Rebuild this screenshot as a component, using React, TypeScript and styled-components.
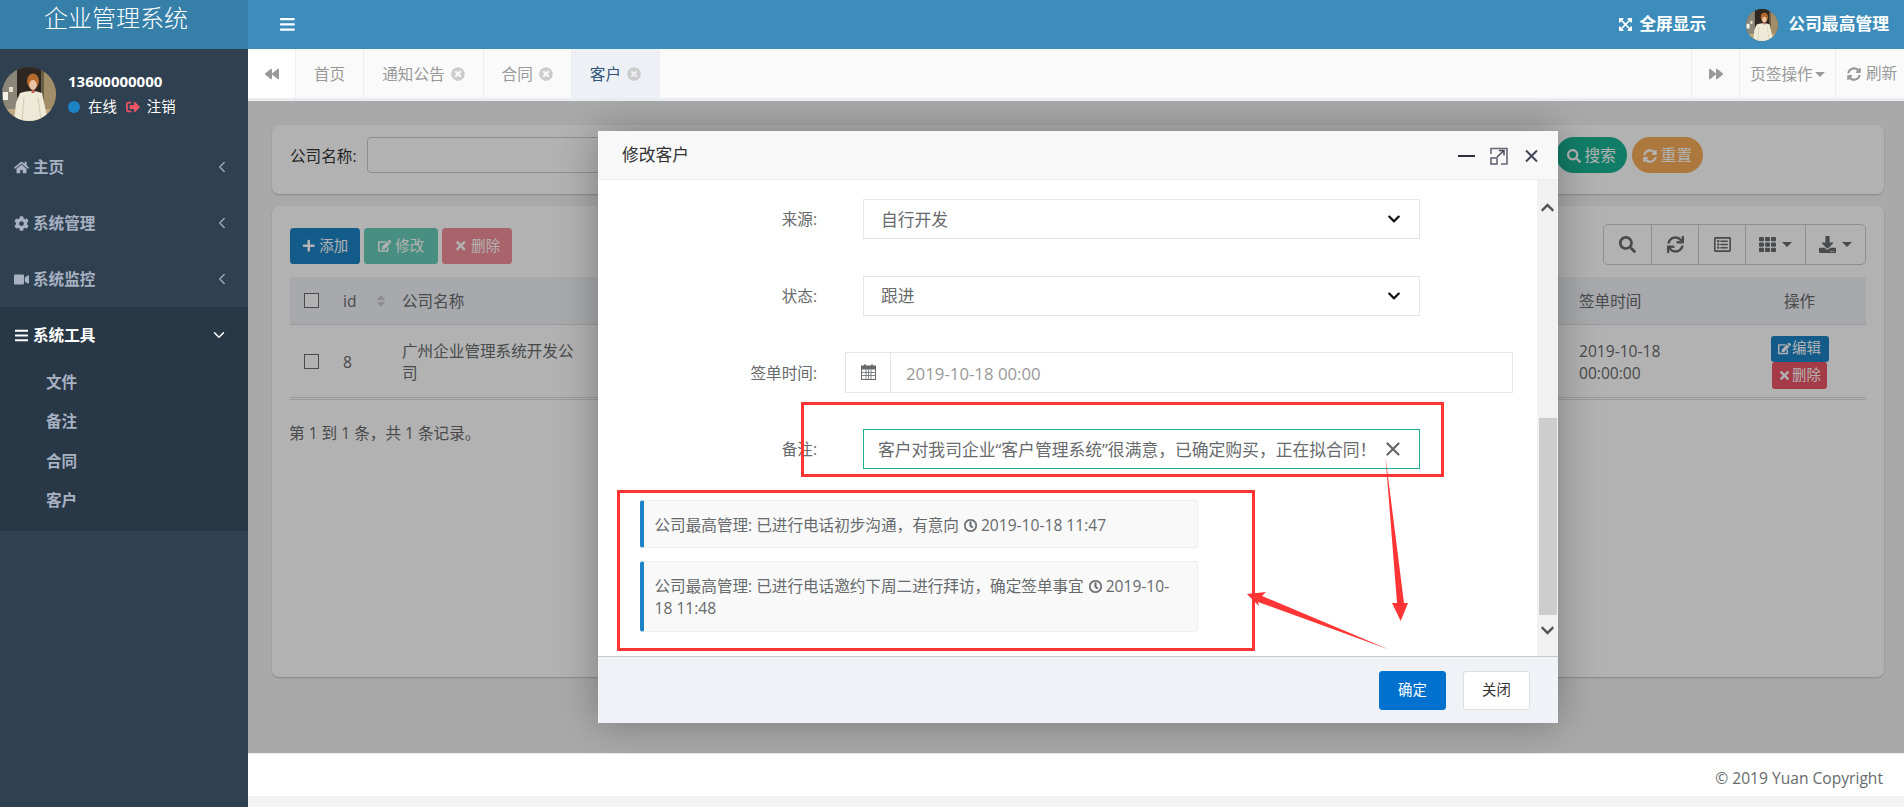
import React from 'react';
import styled, { createGlobalStyle } from 'styled-components';
import { ChevronDown, ChevronLeft, X } from 'lucide-react';
import {
  FaBackward,
  FaBars,
  FaChevronDown,
  FaChevronUp,
  FaCog,
  FaDownload,
  FaEdit,
  FaExpandArrowsAlt,
  FaForward,
  FaHome,
  FaPlus,
  FaRegClock,
  FaRegListAlt,
  FaSearch,
  FaSignOutAlt,
  FaSort,
  FaSync,
  FaSyncAlt,
  FaTh,
  FaTimes,
  FaTimesCircle,
  FaVideo,
} from 'react-icons/fa';

const GlobalStyle = createGlobalStyle`
  html, body {
    margin: 0;
    padding: 0;
    background: #fff;
    overflow: hidden;
  }
  * {
    box-sizing: border-box;
  }
  body {
    font-family: "Open Sans", "Noto Sans CJK SC", sans-serif;
    font-size: 15.6px;
    line-height: 22.3px;
    color: #676a6c;
  }
`;

const Page = styled.div`
  position: relative;
  width: 1904px;
  height: 807px;
  display: flex;
`;

const Sidebar = styled.aside`
  width: 248px;
  flex-shrink: 0;
  background: #2f4050;
  color: #a7b1c2;
`;

const Logo = styled.div`
  height: 49px;
  background: #367fa9;
  color: #fff;
  font-size: 24px;
  font-weight: 300;
  line-height: 36px;
  padding-left: 44px;
`;

const Profile = styled.div`
  height: 90px;
  padding: 18px 0 0 2px;
  display: flex;
  gap: 12px;
`;

const ProfileText = styled.div`
  color: #fff;
  padding-top: 3px;
`;

const ProfileName = styled.div`
  font-size: 15px;
  font-weight: 700;
  line-height: 22px;
`;

const ProfileStatus = styled.div`
  margin-top: 4px;
  display: flex;
  align-items: center;
  font-size: 14.4px;
  line-height: 22px;
`;

const StatusDot = styled.span`
  width: 12px;
  height: 12px;
  border-radius: 50%;
  background: #1c84c6;
  margin-right: 8px;
`;

const LogoutIcon = styled(FaSignOutAlt)`
  color: #ed5565;
  font-size: 14px;
  margin: 0 7px 0 9px;
`;

const NavItem = styled.div<{ $active?: boolean }>`
  height: 56px;
  display: flex;
  align-items: center;
  gap: 4px;
  padding: 0 17px 0 14px;
  font-size: 15.6px;
  font-weight: 600;
  color: ${(p) => (p.$active ? '#fff' : '#a7b1c2')};
  background: ${(p) => (p.$active ? '#293846' : 'transparent')};

  > svg {
    font-size: 15px;
    flex-shrink: 0;
  }
`;

const NavArrow = styled.span<{ $open?: boolean }>`
  margin-left: auto;
  margin-right: ${(p) => (p.$open ? '3px' : '0')};
  display: flex;
`;

const SubMenu = styled.div`
  background: #293846;
  padding-bottom: 10px;
`;

const SubItem = styled.div`
  height: 39.4px;
  line-height: 39.4px;
  padding-left: 46px;
  font-weight: 600;
  color: #a7b1c2;
`;

const Main = styled.main`
  flex: 1;
  min-width: 0;
  display: flex;
  flex-direction: column;
`;

const TopBar = styled.header`
  height: 49px;
  background: #3c8dbc;
  color: #fff;
  display: flex;
  align-items: center;
  padding: 0 15px 0 31px;
  font-size: 16.8px;
  font-weight: 700;
`;

const TopAction = styled.div`
  margin-left: auto;
  display: flex;
  align-items: center;
  gap: 6px;
  margin-right: 40px;

  svg {
    font-size: 15px;
  }
`;

const TopUser = styled.div`
  display: flex;
  align-items: center;
  gap: 10px;
`;

const TabsBar = styled.nav`
  height: 52px;
  background: #fafafa;
  border-bottom: 3px solid #e9edf1;
  display: flex;
  color: #999;
`;

const TabArrow = styled.div<{ $white?: boolean }>`
  width: 48px;
  display: flex;
  align-items: center;
  justify-content: center;
  font-size: 14px;
  background: ${(p) => (p.$white ? '#fff' : 'transparent')};
  border-right: 1px solid #eee;
`;

const Tab = styled.div<{ $active?: boolean }>`
  display: flex;
  align-items: center;
  gap: 6px;
  padding: 2px 18px 0;
  border-right: 1px solid #eee;
  background: ${(p) => (p.$active ? '#edf1f5' : 'transparent')};
  color: ${(p) => (p.$active ? '#2f5578' : '#999')};

  svg {
    color: #ccc;
    font-size: 14px;
    margin-top: -2px;
  }
`;

const TabSpacer = styled.div`
  flex: 1;
  border-right: 1px solid #eee;
`;

const TabMenu = styled.div`
  width: 96px;
  display: flex;
  align-items: center;
  justify-content: center;
  gap: 2px;
  padding-top: 2px;
  border-right: 1px solid #eee;
`;

const TabRefresh = styled.div`
  width: 68px;
  display: flex;
  align-items: center;
  padding: 0 0 0 11px;
  gap: 5px;

  svg {
    font-size: 14px;
  }
`;

const Caret = styled.span`
  width: 0;
  height: 0;
  border-top: 5px solid currentColor;
  border-left: 5px solid transparent;
  border-right: 5px solid transparent;
`;

const ContentFrame = styled.section`
  position: relative;
  flex: 1;
  overflow: hidden;
  background: #f3f3f4;
  padding: 24px 20px 0 24px;
`;

const Panel = styled.div`
  background: #fff;
  border-radius: 7px;
  box-shadow: 0 1px 2px rgba(0, 0, 0, 0.2);
  padding: 12px 18px;
`;

const SearchPanel = styled(Panel)`
  height: 69px;
  display: flex;
  align-items: flex-start;
`;

const SearchLabel = styled.label`
  line-height: 38px;
  color: #333;
  margin-right: 11px;
  white-space: nowrap;
`;

const SearchInput = styled.input`
  width: 640px;
  height: 36px;
  border: 1px solid #ccc;
  border-radius: 4px;
  background: #fff;
`;

const SearchButtons = styled.div`
  margin-left: auto;
  margin-right: 163px;
  display: flex;
  gap: 5px;
`;

const PillButton = styled.button<{ $bg: string }>`
  height: 36px;
  padding: 1px 11px 0;
  border: none;
  border-radius: 18px;
  background: ${(p) => p.$bg};
  color: #fff;
  font: inherit;
  display: flex;
  align-items: center;
  gap: 4px;

  svg {
    font-size: 14px;
  }
`;

const TablePanel = styled(Panel)`
  margin-top: 12px;
  height: 471px;
  padding: 18px;
`;

const ToolbarRow = styled.div`
  display: flex;
  justify-content: space-between;
  align-items: flex-start;
  margin-bottom: 12px;
`;

const ActionButtons = styled.div`
  margin-top: 4px;
  display: flex;
  gap: 4px;
`;

const ActionButton = styled.button<{ $bg: string; $dim?: boolean; $w: number }>`
  width: ${(p) => p.$w}px;
  height: 36px;
  padding: 0;
  border: none;
  border-radius: 3.6px;
  background: ${(p) => p.$bg};
  opacity: ${(p) => (p.$dim ? 0.65 : 1)};
  color: #fff;
  font: inherit;
  font-size: 14.4px;
  display: flex;
  align-items: center;
  justify-content: center;
  gap: 4px;

  svg {
    font-size: 13.5px;
  }
`;

const ToolGroup = styled.div`
  height: 41px;
  display: flex;
  border: 1.2px solid #ccc;
  border-radius: 5px;
  color: #676a6c;
`;

const ToolCell = styled.div<{ $w: number }>`
  width: ${(p) => p.$w}px;
  display: flex;
  align-items: center;
  justify-content: center;
  gap: 6px;
  font-size: 17px;

  & + & {
    border-left: 1.2px solid #ccc;
  }
`;

const TableRow = styled.div<{ $head?: boolean }>`
  display: grid;
  grid-template-columns: 47px 65px 190px 1fr 154px 133px;
  align-items: center;
  height: ${(p) => (p.$head ? '48px' : '75px')};
  padding-top: 2px;
  background: ${(p) => (p.$head ? '#eff2f7' : 'transparent')};
  border-bottom: ${(p) => (p.$head ? '1.2px solid #ddd' : '3px double #ddd')};
`;

const CheckBox = styled.span`
  display: block;
  width: 15px;
  height: 15px;
  margin: -2px 0 0 14px;
  border: 1.2px solid #676a6c;
  background: #fff;
`;

const IdCell = styled.div`
  padding-left: 6px;
  display: flex;
  align-items: center;
  gap: 18px;

  svg {
    font-size: 14px;
    color: #ccc;
  }
`;

const NameCell = styled.div`
  width: 180px;
`;

const DateCell = styled.div`
  padding-right: 50px;
`;

const OpCell = styled.div`
  display: flex;
  flex-direction: column;
  align-items: center;
`;

const RowButton = styled.button<{ $bg: string; $w: number; $h: number }>`
  width: ${(p) => p.$w}px;
  height: ${(p) => p.$h}px;
  padding: 0;
  border: none;
  border-radius: 3px;
  background: ${(p) => p.$bg};
  color: #fff;
  font: inherit;
  font-size: 14.4px;
  display: flex;
  align-items: center;
  justify-content: center;
  gap: 1px;

  svg {
    font-size: 13px;
  }
`;

const RecordCount = styled.div`
  margin: 22px 0 0 -1px;
`;

const Overlay = styled.div`
  position: absolute;
  inset: 0;
  background: rgba(0, 0, 0, 0.3);
`;

const Modal = styled.div`
  position: absolute;
  left: 350px;
  top: 30px;
  width: 960px;
  height: 592px;
  display: flex;
  flex-direction: column;
  background: #fff;
  box-shadow: 0 0 38px rgba(0, 0, 0, 0.3);
`;

const ModalHead = styled.div`
  height: 49px;
  flex-shrink: 0;
  display: flex;
  align-items: center;
  padding: 1px 0 0 24px;
  background: #f8f8f8;
  border-bottom: 1px solid #eee;
  color: #333;
  font-size: 16.8px;
`;

const HeadTools = styled.svg`
  margin-left: auto;
  margin-right: 20px;
`;

const ModalBody = styled.div`
  flex: 1;
  min-height: 0;
  display: flex;
`;

const FormArea = styled.div`
  flex: 1;
  padding-top: 19px;
`;

const FormRow = styled.div`
  display: flex;
  align-items: center;
  height: 40px;
  margin-bottom: 36.6px;
`;

const FormLabel = styled.label`
  width: 219px;
  margin-right: 28px;
  padding-top: 1px;
  text-align: right;
  color: #676a6c;
`;

const SelectBox = styled.div<{ $focus?: boolean }>`
  width: 557px;
  height: 40px;
  margin-left: 18px;
  padding: 2px ${(p) => (p.$focus ? '15px' : '18px')} 0 ${(p) => (p.$focus ? '14px' : '17px')};
  display: flex;
  align-items: center;
  justify-content: space-between;
  border: 1.2px solid ${(p) => (p.$focus ? '#1ab394' : '#e5e6e7')};
  font-size: 16.8px;
  white-space: nowrap;

  > svg {
    font-size: 14px;
    margin-top: -2px;
    color: ${(p) => (p.$focus ? '#666' : '#111')};
  }
`;

const DateGroup = styled.div`
  width: 668px;
  height: 41px;
  display: flex;
  border: 1.2px solid #e5e6e7;
`;

const DateAddon = styled.div`
  width: 45px;
  display: flex;
  align-items: center;
  justify-content: center;
  border-right: 1.2px solid #e5e6e7;
`;

const DateValue = styled.div`
  padding-left: 15px;
  font-size: 16.8px;
  line-height: 41px;
  color: #999;
`;

const NoteList = styled.div`
  margin-top: -5.6px;
  padding-left: 42px;
  display: flex;
  flex-direction: column;
  gap: 13px;
`;

const NoteCard = styled.div`
  width: 558px;
  padding: 13px 14px 11px 10.5px;
  background: #f9f9f9;
  border: 1.2px solid #eee;
  border-left: 4.8px solid #1c84c6;
  border-radius: 3px;

  svg {
    font-size: 13px;
    margin: 0 4px 0 5px;
    vertical-align: -1px;
    stroke: currentColor;
    stroke-width: 24;
  }
`;

const ScrollTrack = styled.div`
  width: 21px;
  flex-shrink: 0;
  background: #f1f1f1;
  padding-top: 20px;
  display: flex;
  flex-direction: column;
  align-items: center;
  color: #555;
  font-size: 15px;
`;

const ScrollThumb = styled.div`
  width: 18px;
  height: 197px;
  margin: 203px 0 8px;
  background: #cdcdcd;
`;

const ModalFoot = styled.div`
  height: 67px;
  flex-shrink: 0;
  display: flex;
  align-items: center;
  justify-content: flex-end;
  gap: 17px;
  padding: 0 28px 0 0;
  background: #eff3f8;
  border-top: 1px solid #c9c9c9;
`;

const FootButton = styled.button<{ $primary?: boolean }>`
  width: 67px;
  height: 39px;
  border-radius: 3px;
  border: 1.2px solid ${(p) => (p.$primary ? '#0071ce' : '#dedede')};
  background: ${(p) => (p.$primary ? '#0071ce' : '#fff')};
  color: ${(p) => (p.$primary ? '#fff' : '#333')};
  font: inherit;
  font-size: 14.4px;
`;

const Footer = styled.footer`
  height: 43px;
  padding-right: 21px;
  background: #fff;
  border-top: 1px solid #e7eaec;
  text-align: right;
  line-height: 49px;
`;

const FooterStrip = styled.div`
  height: 11px;
  background: #f3f3f3;
`;

const Highlight = styled.div<{ $x: number; $y: number; $w: number; $h: number }>`
  position: absolute;
  left: ${(p) => p.$x}px;
  top: ${(p) => p.$y}px;
  width: ${(p) => p.$w}px;
  height: ${(p) => p.$h}px;
  border: 3px solid #ff3535;
  pointer-events: none;
`;

const ArrowLayer = styled.svg`
  position: absolute;
  inset: 0;
  pointer-events: none;
`;

const AvatarImage = styled.svg<{ $size: number }>`
  width: ${(p) => p.$size}px;
  height: ${(p) => p.$size}px;
  flex-shrink: 0;
  border-radius: 50%;
`;

const Avatar = ({ size }: { size: number }) => (
  <AvatarImage $size={size} viewBox="0 0 54 54">
    <rect width="54" height="54" fill="#6a5d45" />
    <rect x="0" y="0" width="15" height="54" fill="#8b8778" />
    <rect x="15" y="0" width="24" height="30" fill="#2e2620" />
    <rect x="42" y="0" width="12" height="54" fill="#a18d68" />
    <rect x="1" y="25" width="5" height="8" fill="#f5f2e8" />
    <rect x="7" y="20" width="4" height="5" fill="#e6e0cf" />
    <rect x="0" y="42" width="54" height="12" fill="#bfa97f" />
    <path d="M18 26 Q30 22 40 26 L46 54 L12 54 L14 36 Z" fill="#efead8" />
    <path d="M22 30 L20 54 M36 30 L39 54" stroke="#d6cdb4" strokeWidth="1.2" fill="none" />
    <ellipse cx="31" cy="14" rx="6" ry="7.5" fill="#b5692c" />
    <ellipse cx="31" cy="18" rx="3.8" ry="5" fill="#eac3a3" />
    <rect x="29.5" y="23" width="3" height="3" fill="#c8604e" />
  </AvatarImage>
);

const CalendarIcon = () => (
  <svg width="15" height="16" viewBox="0 0 15 16">
    <rect x="0.5" y="2" width="14" height="13.5" fill="#fff" stroke="#676a6c" />
    <rect x="0.5" y="2" width="14" height="3.5" fill="#676a6c" />
    <rect x="3" y="0.5" width="2" height="3.5" fill="#676a6c" />
    <rect x="10" y="0.5" width="2" height="3.5" fill="#676a6c" />
    <path
      d="M5 5.5 V15 M7.5 5.5 V15 M10 5.5 V15 M1 8.5 H14 M1 11.5 H14"
      stroke="#676a6c"
      strokeWidth="0.8"
    />
  </svg>
);

const App: React.FC = () => {
  return (
    <>
      <GlobalStyle />
      <Page>
        <Sidebar>
          <Logo>企业管理系统</Logo>
          <Profile>
            <Avatar size={54} />
            <ProfileText>
              <ProfileName>13600000000</ProfileName>
              <ProfileStatus>
                <StatusDot />
                在线
                <LogoutIcon />
                注销
              </ProfileStatus>
            </ProfileText>
          </Profile>
          <NavItem>
            <FaHome />
            主页
            <NavArrow>
              <ChevronLeft size={18} strokeWidth={1.6} />
            </NavArrow>
          </NavItem>
          <NavItem>
            <FaCog />
            系统管理
            <NavArrow>
              <ChevronLeft size={18} strokeWidth={1.6} />
            </NavArrow>
          </NavItem>
          <NavItem>
            <FaVideo />
            系统监控
            <NavArrow>
              <ChevronLeft size={18} strokeWidth={1.6} />
            </NavArrow>
          </NavItem>
          <NavItem $active>
            <FaBars />
            系统工具
            <NavArrow $open>
              <ChevronDown size={18} strokeWidth={2} />
            </NavArrow>
          </NavItem>
          <SubMenu>
            <SubItem>文件</SubItem>
            <SubItem>备注</SubItem>
            <SubItem>合同</SubItem>
            <SubItem>客户</SubItem>
          </SubMenu>
        </Sidebar>
        <Main>
          <TopBar>
            <FaBars />
            <TopAction>
              <FaExpandArrowsAlt />
              全屏显示
            </TopAction>
            <TopUser>
              <Avatar size={32} />
              公司最高管理
            </TopUser>
          </TopBar>
          <TabsBar>
            <TabArrow $white>
              <FaBackward />
            </TabArrow>
            <Tab>首页</Tab>
            <Tab>
              通知公告
              <FaTimesCircle />
            </Tab>
            <Tab>
              合同
              <FaTimesCircle />
            </Tab>
            <Tab $active>
              客户
              <FaTimesCircle />
            </Tab>
            <TabSpacer />
            <TabArrow>
              <FaForward />
            </TabArrow>
            <TabMenu>
              页签操作
              <Caret />
            </TabMenu>
            <TabRefresh>
              <FaSyncAlt />
              刷新
            </TabRefresh>
          </TabsBar>
          <ContentFrame>
            <SearchPanel>
              <SearchLabel>公司名称:</SearchLabel>
              <SearchInput />
              <SearchButtons>
                <PillButton $bg="#1ab394">
                  <FaSearch />
                  搜索
                </PillButton>
                <PillButton $bg="#f8ac59">
                  <FaSyncAlt />
                  重置
                </PillButton>
              </SearchButtons>
            </SearchPanel>
            <TablePanel>
              <ToolbarRow>
                <ActionButtons>
                  <ActionButton $bg="#1c84c6" $w={70}>
                    <FaPlus />
                    添加
                  </ActionButton>
                  <ActionButton $bg="#1ab394" $dim $w={74}>
                    <FaEdit />
                    修改
                  </ActionButton>
                  <ActionButton $bg="#ed5565" $dim $w={70}>
                    <FaTimes />
                    删除
                  </ActionButton>
                </ActionButtons>
                <ToolGroup>
                  <ToolCell $w={47}>
                    <FaSearch />
                  </ToolCell>
                  <ToolCell $w={47}>
                    <FaSync />
                  </ToolCell>
                  <ToolCell $w={47}>
                    <FaRegListAlt />
                  </ToolCell>
                  <ToolCell $w={60}>
                    <FaTh />
                    <Caret />
                  </ToolCell>
                  <ToolCell $w={60}>
                    <FaDownload />
                    <Caret />
                  </ToolCell>
                </ToolGroup>
              </ToolbarRow>
              <TableRow $head>
                <CheckBox />
                <IdCell>
                  id
                  <FaSort />
                </IdCell>
                <NameCell>公司名称</NameCell>
                <div />
                <div>签单时间</div>
                <OpCell>操作</OpCell>
              </TableRow>
              <TableRow>
                <CheckBox />
                <IdCell>8</IdCell>
                <NameCell>广州企业管理系统开发公司</NameCell>
                <div />
                <DateCell>2019-10-18 00:00:00</DateCell>
                <OpCell>
                  <RowButton $bg="#1c84c6" $w={58} $h={26}>
                    <FaEdit />
                    编辑
                  </RowButton>
                  <RowButton $bg="#ed5565" $w={55} $h={27}>
                    <FaTimes />
                    删除
                  </RowButton>
                </OpCell>
              </TableRow>
              <RecordCount>第 1 到 1 条，共 1 条记录。</RecordCount>
            </TablePanel>
            <Overlay />
            <Modal>
              <ModalHead>
                修改客户
                <HeadTools width="80" height="20" viewBox="0 0 80 20">
                  <rect x="0" y="9" width="17" height="2" fill="#2f2f3a" />
                  <path d="M33 8 V2.5 H49 V18 H43" fill="none" stroke="#667" strokeWidth="1.6" />
                  <rect x="33" y="12" width="6" height="6" fill="none" stroke="#667" strokeWidth="1.6" />
                  <path d="M39 11 L46 4.5 M41 4.5 H46 V9.5" fill="none" stroke="#445" strokeWidth="1.4" />
                  <path d="M68 4.5 L79 15.5 M79 4.5 L68 15.5" stroke="#445" strokeWidth="2" />
                </HeadTools>
              </ModalHead>
              <ModalBody>
                <FormArea>
                  <FormRow>
                    <FormLabel>来源:</FormLabel>
                    <SelectBox>
                      自行开发
                      <FaChevronDown />
                    </SelectBox>
                  </FormRow>
                  <FormRow>
                    <FormLabel>状态:</FormLabel>
                    <SelectBox>
                      跟进
                      <FaChevronDown />
                    </SelectBox>
                  </FormRow>
                  <FormRow>
                    <FormLabel>签单时间:</FormLabel>
                    <DateGroup>
                      <DateAddon>
                        <CalendarIcon />
                      </DateAddon>
                      <DateValue>2019-10-18 00:00</DateValue>
                    </DateGroup>
                  </FormRow>
                  <FormRow>
                    <FormLabel>备注:</FormLabel>
                    <SelectBox $focus>
                      客户对我司企业“客户管理系统”很满意，已确定购买，正在拟合同！
                      <X size={22} strokeWidth={2.4} />
                    </SelectBox>
                  </FormRow>
                  <NoteList>
                    <NoteCard>
                      公司最高管理: 已进行电话初步沟通，有意向
                      <FaRegClock />
                      2019-10-18 11:47
                    </NoteCard>
                    <NoteCard>
                      公司最高管理: 已进行电话邀约下周二进行拜访，确定签单事宜
                      <FaRegClock />
                      2019-10-18 11:48
                    </NoteCard>
                  </NoteList>
                </FormArea>
                <ScrollTrack>
                  <FaChevronUp />
                  <ScrollThumb />
                  <FaChevronDown />
                </ScrollTrack>
              </ModalBody>
              <ModalFoot>
                <FootButton $primary>确定</FootButton>
                <FootButton>关闭</FootButton>
              </ModalFoot>
            </Modal>
          </ContentFrame>
          <Footer>© 2019 Yuan Copyright</Footer>
          <FooterStrip />
        </Main>
        <Highlight $x={801} $y={402} $w={643} $h={75} />
        <Highlight $x={617} $y={490} $w={638} $h={161} />
        <ArrowLayer width="1904" height="807" viewBox="0 0 1904 807">
          <polygon
            points="1385.5,457 1397,603 1392,603 1400.7,621 1408,603 1404,603"
            fill="#ff3535"
          />
          <polygon
            points="1247,594 1266,592 1262,596 1389,649.5 1258,602 1259,606"
            fill="#ff3535"
          />
        </ArrowLayer>
      </Page>
    </>
  );
};

export default App;
